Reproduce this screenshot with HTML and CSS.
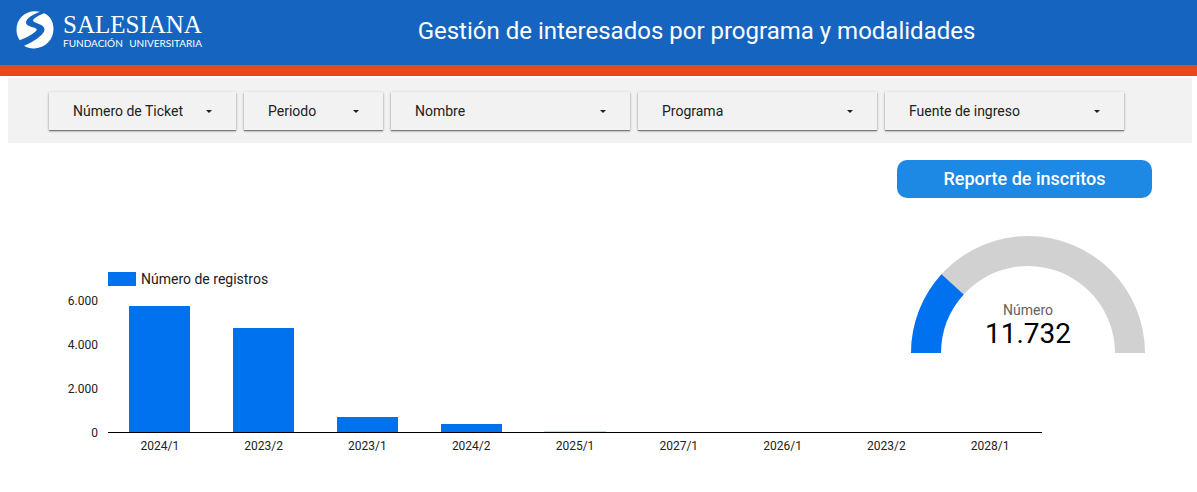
FILE: index.html
```html
<!DOCTYPE html>
<html lang="es">
<head>
<meta charset="utf-8">
<meta name="viewport" content="width=device-width, initial-scale=1">
<title>Gestión de interesados por programa y modalidades</title>
<link rel="stylesheet" href="styles.css">
</head>
<body>
<header class="header">
  <div class="logo">
    <svg class="logo-mark" viewBox="0 0 38 38" aria-hidden="true">
      <path d="M24 .8C11-2 .5 6.500.5 18.500c0 4.500 1.200 8 3.300 10.700 6-2.200 13-5.700 16.200-9.200 1.300-1.500.5-2.500-1-3-3-1.200-9-2-9-5.500C10 7.500 17 3.500 24 .8Z"/>
      <path d="M28 2.200C22.500 4.500 17 7.500 17 9.500c0 3 11.500 3 11.500 9 0 5.500-13 13.500-20.500 16.300 3 1.900 7 2.900 10.500 2.700C30 36.800 37.500 28 37.500 18 37.500 10.500 34 4.700 28 2.200Z"/>
    </svg>
    <div class="logo-text">
      <span class="logo-name">SALESIANA</span>
      <span class="logo-sub"><span>FUNDACIÓN</span> <span>UNIVERSITARIA</span></span>
    </div>
  </div>
  <h1 class="title">Gestión de interesados por programa y modalidades</h1>
</header>

<div class="filters">
  <button type="button" class="filter">Número de Ticket<span class="caret"></span></button>
  <button type="button" class="filter">Periodo<span class="caret"></span></button>
  <button type="button" class="filter">Nombre<span class="caret"></span></button>
  <button type="button" class="filter">Programa<span class="caret"></span></button>
  <button type="button" class="filter">Fuente de ingreso<span class="caret"></span></button>
</div>

<main class="content">
  <section class="chart">
    <div class="legend"><span class="swatch"></span>Número de registros</div>
    <div class="axis-y"><span>6.000</span><span>4.000</span><span>2.000</span><span>0</span></div>
    <div class="plot">
      <div class="bar" style="height:96%"></div>
      <div class="bar" style="height:79.500%"></div>
      <div class="bar" style="height:11.500%"></div>
      <div class="bar" style="height:6%"></div>
      <div class="bar faint" style="height:0.800%"></div>
      <div class="bar" style="height:0"></div>
      <div class="bar" style="height:0"></div>
      <div class="bar" style="height:0"></div>
      <div class="bar" style="height:0"></div>
    </div>
    <div class="axis-x">
      <span>2024/1</span><span>2023/2</span><span>2023/1</span><span>2024/2</span><span>2025/1</span><span>2027/1</span><span>2026/1</span><span>2023/2</span><span>2028/1</span>
    </div>
  </section>
  <aside class="side">
    <button type="button" class="report">Reporte de inscritos</button>
    <div class="gauge">
      <svg class="gauge-arc" viewBox="0 0 234 117" aria-hidden="true">
        <path fill="#d1d1d1" d="M0 117a117 117 0 0 1 234 0h-30a87 87 0 0 0-174 0Z"/>
        <path fill="#0072f0" d="M0 117A117 117 0 0 1 30.500 38.300L52.700 58.500A87 87 0 0 0 30 117Z"/>
      </svg>
      <div class="gauge-text">
        <span class="gauge-label">Número</span>
        <span class="gauge-value">11.732</span>
      </div>
    </div>
  </aside>
</main>
</body>
</html>
```
FILE: styles.css
```css
* { box-sizing: border-box; }

body {
  margin: 0;
  background: #fff;
  color: #212121;
  font-family: Roboto, "Liberation Sans", sans-serif;
}

button {
  border: 0;
  font-family: inherit;
  cursor: pointer;
}

.header {
  display: grid;
  grid-template-columns: 250px 1fr;
  align-items: center;
  height: 76px;
  padding: 0 70px 0 16px;
  background: #1565c0;
  border-bottom: 11px solid #e64a19;
  color: #fff;
}

.logo {
  display: flex;
  align-items: center;
  gap: 9px;
  padding-bottom: 5px;
}

.logo-mark {
  width: 38px;
  height: 38px;
  fill: #fff;
}

.logo-text {
  display: flex;
  flex-direction: column;
}

.logo-name {
  font: 25px/26px "Liberation Serif", serif;
}

.logo-sub {
  display: flex;
  justify-content: space-between;
  font: 10px/10px Lato, sans-serif;
}

.title {
  margin: 0;
  padding-bottom: 4px;
  font-size: 24px;
  font-weight: 400;
  line-height: 32px;
  text-align: center;
}

.filters {
  display: grid;
  grid-template-columns: 187fr 139fr 239fr 239fr 239fr;
  gap: 8px;
  margin: 2px 5px 0 8px;
  padding: 14px 68px 13px 41px;
  background: #f2f2f2;
}

.filter {
  display: flex;
  align-items: center;
  justify-content: space-between;
  height: 38px;
  padding: 0 24px;
  background: #f2f2f2;
  box-shadow: 0 1px 1px rgba(0, 0, 0, .4), 0 1px 3px rgba(0, 0, 0, .25);
  color: #212121;
  font-size: 14px;
}

.caret {
  border: 3px solid transparent;
  border-top-color: #212121;
  border-bottom: 0;
}

.content {
  display: grid;
  grid-template-columns: 1fr 255px;
  padding: 17px 45px 32px 53px;
}

/* The plot runs on below the gauge, into the side column. */
.chart {
  display: grid;
  grid-area: 1 / 1 / 2 / 3;
  grid-template-columns: 45px 1fr;
  grid-template-rows: 16px 132px auto;
  column-gap: 10px;
  row-gap: 14px;
  margin-right: 110px;
  padding-top: 111px;
}

.legend {
  display: flex;
  grid-column: 2;
  align-items: center;
  gap: 5px;
  font-size: 14px;
  line-height: 16px;
}

.swatch {
  width: 28px;
  height: 14px;
  background: #0072f0;
}

.axis-y {
  display: flex;
  flex-direction: column;
  justify-content: space-between;
  margin: -8px 0;
  font-size: 12px;
  line-height: 16px;
  text-align: right;
}

.plot {
  display: grid;
  grid-template-columns: repeat(9, 1fr);
  align-items: end;
  justify-items: center;
  border-bottom: 1px solid #000;
}

.bar {
  width: 59%;
  background: #0072f0;
}

.faint { opacity: .25; }

.axis-x {
  display: grid;
  grid-column: 2;
  grid-template-columns: repeat(9, 1fr);
  margin-top: -9px;
  font-size: 12px;
  line-height: 16px;
  text-align: center;
}

.side {
  grid-area: 1 / 2;
  justify-self: stretch;
}

.report {
  width: 100%;
  height: 38px;
  padding: 0 0 2px;
  border-radius: 10px;
  background: #1e88e5;
  color: #fff;
  font-size: 18px;
  font-weight: 500;
}

.gauge {
  display: grid;
  justify-items: center;
  margin-top: 38px;
  padding-left: 7px;
}

.gauge-arc {
  grid-area: 1 / 1;
  width: 234px;
}

.gauge-text {
  display: flex;
  grid-area: 1 / 1;
  flex-direction: column;
  align-self: end;
  align-items: center;
  padding-bottom: 3px;
}

.gauge-label {
  color: #616161;
  font-size: 14px;
  line-height: 16px;
}

.gauge-value {
  color: #000;
  font-size: 28px;
  line-height: 32px;
}
```
